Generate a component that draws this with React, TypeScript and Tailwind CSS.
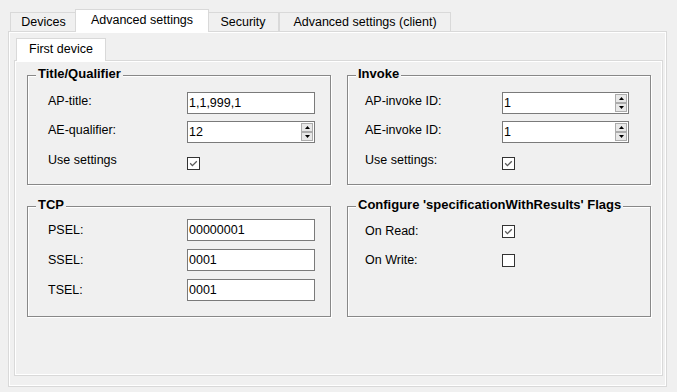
import React from "react";

const Check = ({ checked }: { checked: boolean }) => (
  <div className="w-[13px] h-[13px] border border-[#333333] bg-white flex items-center justify-center shrink-0">
    {checked && (
      <svg width="11" height="11" viewBox="0 0 11 11">
        <path d="M2.2 5.3 L4.4 7.6 L8.8 3.2" fill="none" stroke="#5a5a5a" strokeWidth="1.3" />
      </svg>
    )}
  </div>
);

const SpinBtn = ({ up }: { up: boolean }) => (
  <div className="flex-1 border border-[#acacac] bg-[#e8e8e8] flex items-center justify-center">
    <svg width="5" height="3" viewBox="0 0 5 3">
      {up ? <path d="M2.5 0 L5 3 L0 3Z" fill="#000" /> : <path d="M0 0 L5 0 L2.5 3Z" fill="#000" />}
    </svg>
  </div>
);

const Field = ({ value, spin, className }: { value: string; spin?: boolean; className: string }) => (
  <div className={`flex h-[22px] border border-[#7a7a7a] bg-white ${className}`}>
    <div className="flex-1 flex items-center pl-[1px] leading-none">{value}</div>
    {spin && (
      <div className="flex flex-col w-[12px] py-[1px] mr-[1px]">
        <SpinBtn up />
        <SpinBtn up={false} />
      </div>
    )}
  </div>
);

const Group = ({
  title,
  className,
  children,
}: {
  title: string;
  className: string;
  children: React.ReactNode;
}) => (
  <div className={`relative border border-[#888888] shadow-[inset_1px_1px_0_#ffffff,1px_1px_0_#ffffff] ${className}`}>
    <span className="absolute -top-[9px] left-[8px] px-[2px] bg-[#f0f0f0] font-bold text-[13px] leading-[14px] whitespace-nowrap">
      {title}
    </span>
    {children}
  </div>
);

export default function App() {
  return (
    <div className="w-[677px] h-[392px] bg-[#f0f0f0] font-['Liberation_Sans',Arial,sans-serif] text-[12.5px] text-black pt-[9px] pl-[8px] overflow-hidden">
      <div className="w-[659px]">
        {/* outer tabs */}
        <div className="relative z-10 flex items-end h-[23px] -mb-px pl-[2px]">
          <div className="mb-px h-[19px] w-[67px] border border-b-0 border-[#d9d9d9] bg-[#f0f0f0] flex items-center justify-center">
            Devices
          </div>
          <div className="relative z-10 -mx-[2px] h-[23px] w-[134px] border border-b-0 border-[#d9d9d9] bg-white flex items-center justify-center pb-[2px]">
            Advanced settings
          </div>
          <div className="mb-px h-[19px] w-[72px] border border-b-0 border-[#d9d9d9] bg-[#f0f0f0] flex items-center justify-center">
            Security
          </div>
          <div className="mb-px h-[19px] w-[172px] border border-b-0 border-[#d9d9d9] bg-[#f0f0f0] flex items-center justify-center">
            Advanced settings (client)
          </div>
        </div>
        {/* outer panel */}
        <div className="h-[356px] border border-[#d9d9d9] shadow-[inset_0_0_0_1px_#ffffff] pl-[5px] pr-[3px] pt-[6px]">
          {/* inner tabs */}
          <div className="relative z-10 flex items-end h-[23px] -mb-px pl-[2px]">
            <div className="h-[23px] w-[90px] border border-b-0 border-[#d9d9d9] bg-white flex items-center justify-center pb-[2px]">
              First device
            </div>
          </div>
          {/* inner panel */}
          <div className="h-[316px] border border-[#d9d9d9] shadow-[inset_0_0_0_1px_#ffffff] pl-[12px] pt-[14px]">
            <div className="grid grid-cols-[304px_304px] gap-x-[16px] gap-y-[21px]">
              <Group title="Title/Qualifier" className="h-[110px] pl-[20px] pt-[16px]">
                <div className="flex items-center h-[22px]">
                  <div className="w-[139px] pb-[4px]">AP-title:</div>
                  <Field value="1,1,999,1" className="w-[128px]" />
                </div>
                <div className="flex items-center h-[22px] mt-[7px]">
                  <div className="w-[139px] pb-[4px]">AE-qualifier:</div>
                  <Field value="12" spin className="w-[128px]" />
                </div>
                <div className="flex items-center h-[22px] mt-[9px]">
                  <div className="w-[139px] pb-[6px]">Use settings</div>
                  <Check checked />
                </div>
              </Group>
              <Group title="Invoke" className="h-[110px] pl-[17px] pt-[16px]">
                <div className="flex items-center h-[22px]">
                  <div className="w-[137px] pb-[4px]">AP-invoke ID:</div>
                  <Field value="1" spin className="w-[127px]" />
                </div>
                <div className="flex items-center h-[22px] mt-[7px]">
                  <div className="w-[137px] pb-[4px]">AE-invoke ID:</div>
                  <Field value="1" spin className="w-[127px]" />
                </div>
                <div className="flex items-center h-[22px] mt-[9px]">
                  <div className="w-[137px] pb-[6px]">Use settings:</div>
                  <Check checked />
                </div>
              </Group>
              <Group title="TCP" className="h-[111px] pl-[20px] pt-[12px]">
                <div className="flex items-center h-[22px]">
                  <div className="w-[139px]">PSEL:</div>
                  <Field value="00000001" className="w-[128px]" />
                </div>
                <div className="flex items-center h-[22px] mt-[8px]">
                  <div className="w-[139px]">SSEL:</div>
                  <Field value="0001" className="w-[128px]" />
                </div>
                <div className="flex items-center h-[22px] mt-[8px]">
                  <div className="w-[139px]">TSEL:</div>
                  <Field value="0001" className="w-[128px]" />
                </div>
              </Group>
              <Group title="Configure 'specificationWithResults' Flags" className="h-[111px] pl-[17px] pt-[13px]">
                <div className="flex items-center h-[22px]">
                  <div className="w-[137px]">On Read:</div>
                  <Check checked />
                </div>
                <div className="flex items-center h-[22px] mt-[7px]">
                  <div className="w-[137px]">On Write:</div>
                  <Check checked={false} />
                </div>
              </Group>
            </div>
          </div>
        </div>
      </div>
    </div>
  );
}
